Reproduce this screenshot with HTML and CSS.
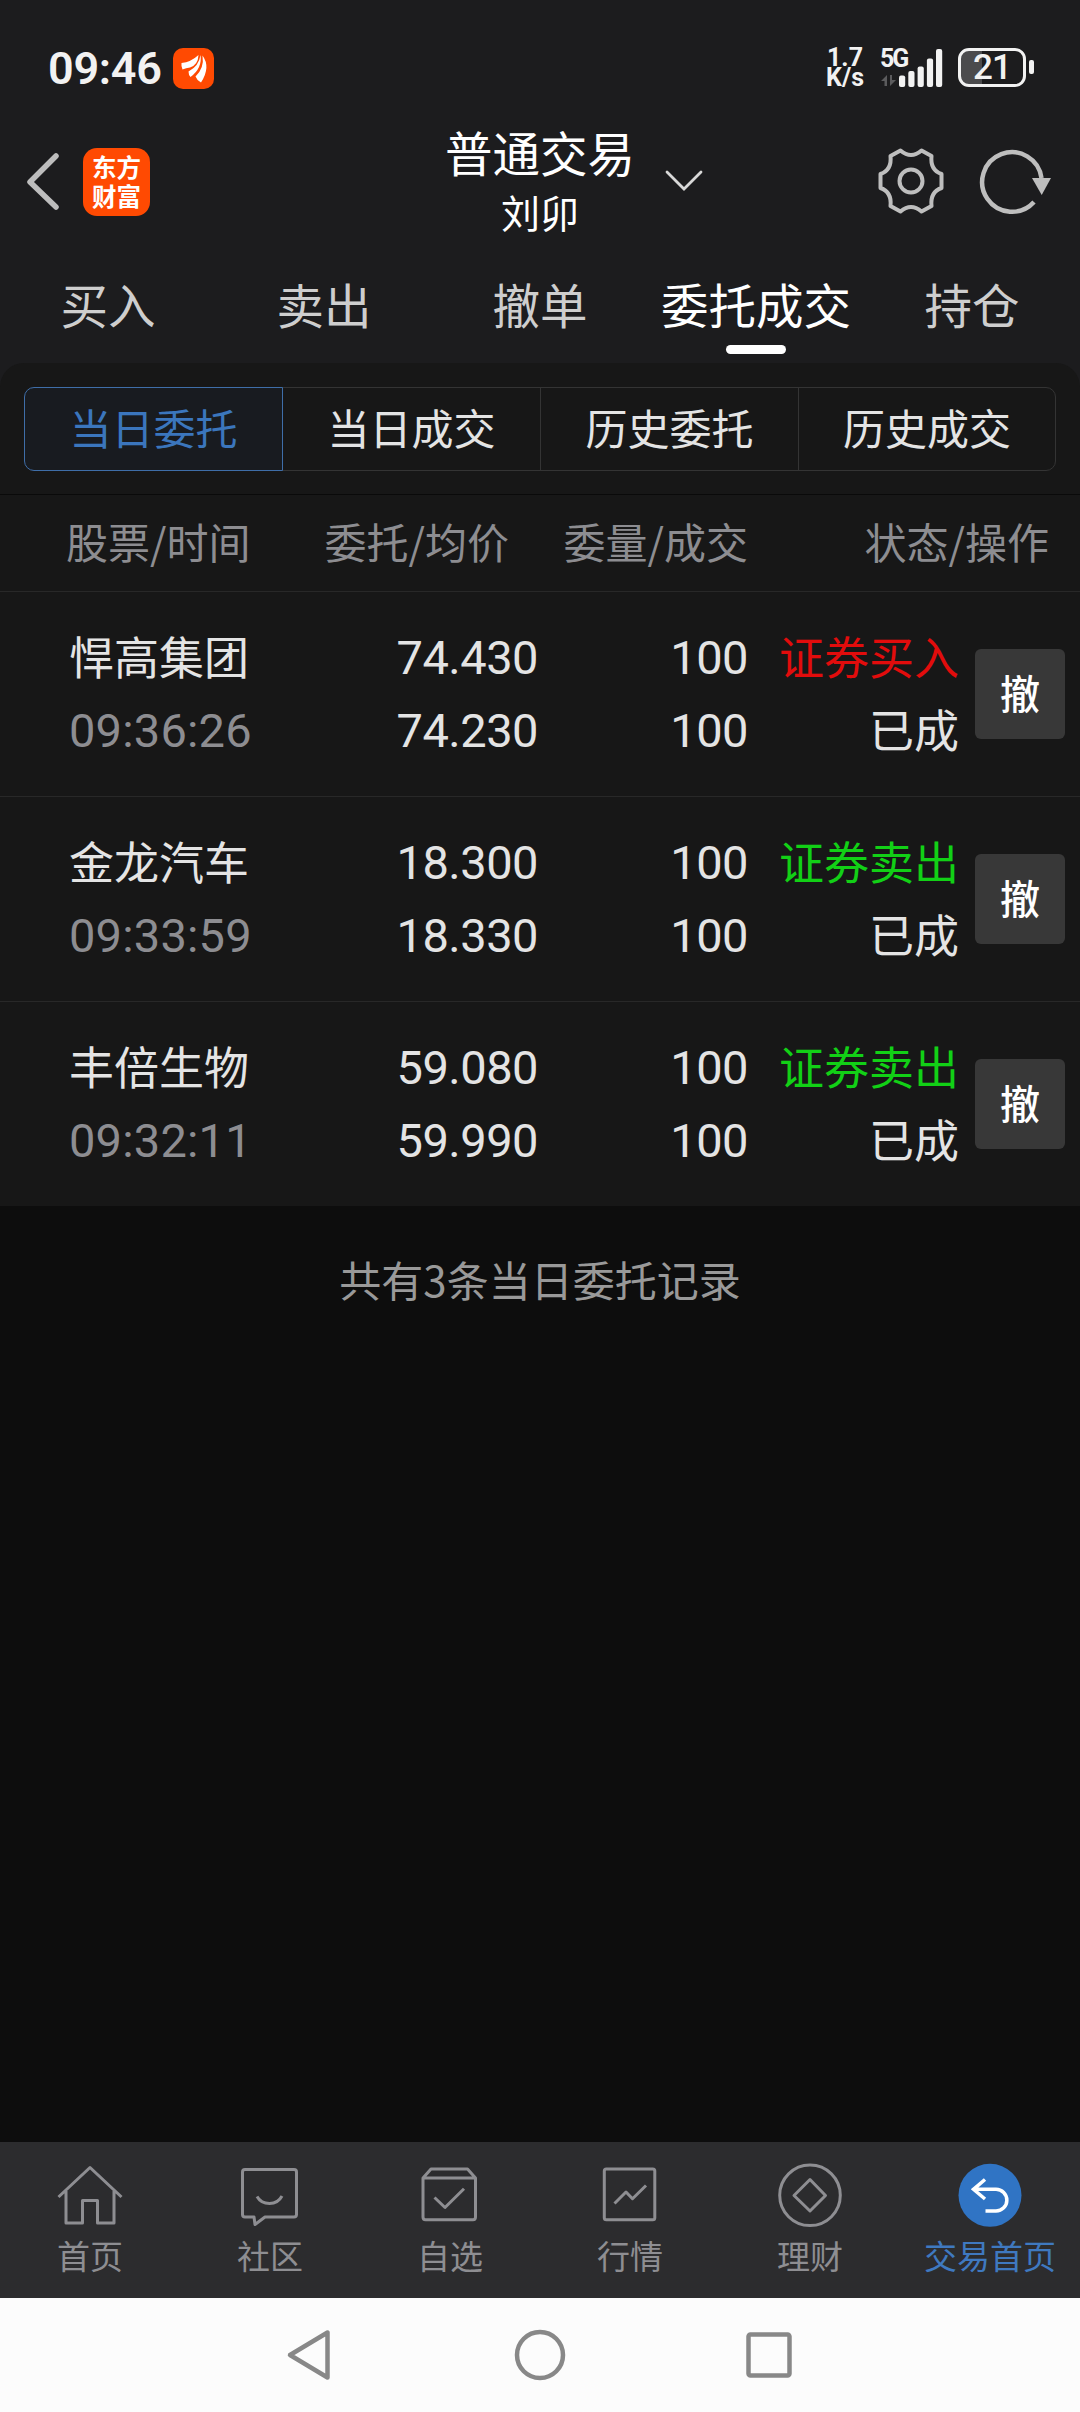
FILE: index.html
```html
<!DOCTYPE html>
<html lang="zh-CN">
<head>
<meta charset="utf-8">
<title>普通交易</title>
<link rel="stylesheet" href="styles.css">
</head>
<body>
<div class="app">
  <div class="status">
    <span class="clock">09:46</span>
    <svg class="status-logo" width="41" height="41" viewBox="0 0 41 41"><rect width="41" height="41" rx="10" fill="#ff4a02"/><g fill="#fff"><path d="M8.500 15Q18 14 25.500 7Q25 17 17 19.500Q13 20 9.500 21.500Q8 18 8.500 15Z"/><path d="M27.500 7Q29.500 20 17.500 29Q15.500 27 15.500 23.500Q26 18 27.500 7Z"/><path d="M29.500 7.500Q38 19 28 34.500Q24 32.500 22.500 28.500Q31.500 20 29.500 7.500Z"/></g></svg>
    <div class="speed"><span>1.7</span><span>K/s</span></div>
    <div class="signal">
      <span class="net">5G</span>
      <svg width="62" height="38" viewBox="0 0 62 38"><path d="M0 32L6 26V37H3.500V32ZM8.500 26H11V31H15L9 37V26Z" fill="#5b5b5d"/><g fill="#f2f2f2"><rect x="18" y="26.500" width="6.200" height="11.500" rx="2"/><rect x="27.300" y="22" width="6.200" height="16" rx="2"/><rect x="36.600" y="17.500" width="6.200" height="20.500" rx="2"/><rect x="45.900" y="9.500" width="6.200" height="28.500" rx="2"/><rect x="55" y="0" width="6.200" height="38" rx="2"/></g></svg>
    </div>
    <div class="battery"><span class="level">21</span></div>
    <span class="battery-cap"></span>
  </div>

  <header class="header">
    <div class="side">
      <svg width="36" height="60" viewBox="0 0 36 60"><path d="M33 5L7 31L33 56" fill="none" stroke="#bdbdbd" stroke-width="5.500" stroke-linecap="round" stroke-linejoin="round"/></svg>
      <div class="brand"><span>东方</span><span>财富</span></div>
    </div>
    <div class="title"><h1>普通交易</h1><p>刘卯</p></div>
    <div class="side side-right">
      <svg class="drop" width="40" height="24" viewBox="0 0 40 24"><path d="M3 3L20 20L37 3" fill="none" stroke="#d8d8d8" stroke-width="2.800" stroke-linecap="round"/></svg>
      <svg class="gear" width="72" height="72" viewBox="-36 -36 72 72" fill="none" stroke="#bebebe" stroke-width="4" stroke-linejoin="round"><path d="M-20.500 -25L-10.500 -30.500Q0 -21.500 10.500 -30.500L20.500 -25Q19 -11 30.500 -7V7Q19 11 20.500 25L10.500 30.500Q0 21.500 -10.500 30.500L-20.500 25Q-19 11 -30.500 7V-7Q-19 -11 -20.500 -25Z"/><circle r="11.500"/></svg>
      <svg class="refresh" width="76" height="72" viewBox="-36 -36 76 72"><path d="M29.500 -3A29.800 29.800 0 1 0 22 21" fill="none" stroke="#bebebe" stroke-width="4.500"/><path d="M20 -3H39L29.700 14Z" fill="#bebebe"/></svg>
    </div>
  </header>

  <nav class="tabs">
    <span>买入</span><span>卖出</span><span>撤单</span><span class="active">委托成交</span><span>持仓</span>
  </nav>

  <main class="panel">
    <div class="segments">
      <span class="on">当日委托</span><span>当日成交</span><span>历史委托</span><span>历史成交</span>
    </div>
    <div class="cols head">
      <span class="c1">股票/时间</span><span>委托/均价</span><span>委量/成交</span><span>状态/操作</span>
    </div>
    <div class="cols row">
      <div class="c1"><p>悍高集团</p><p class="num dim">09:36:26</p></div>
      <div class="num"><p>74.430</p><p>74.230</p></div>
      <div class="num"><p>100</p><p>100</p></div>
      <div><p class="buy">证券买入</p><p>已成</p></div>
      <button class="cancel">撤</button>
    </div>
    <div class="cols row">
      <div class="c1"><p>金龙汽车</p><p class="num dim">09:33:59</p></div>
      <div class="num"><p>18.300</p><p>18.330</p></div>
      <div class="num"><p>100</p><p>100</p></div>
      <div><p class="sell">证券卖出</p><p>已成</p></div>
      <button class="cancel">撤</button>
    </div>
    <div class="cols row">
      <div class="c1"><p>丰倍生物</p><p class="num dim">09:32:11</p></div>
      <div class="num"><p>59.080</p><p>59.990</p></div>
      <div class="num"><p>100</p><p>100</p></div>
      <div><p class="sell">证券卖出</p><p>已成</p></div>
      <button class="cancel">撤</button>
    </div>
  </main>
  <p class="summary">共有3条当日委托记录</p>

  <nav class="bottom">
    <a><svg width="70" height="70" viewBox="0 0 70 70"><path d="M3.500 37L35 7.500L66.500 37M11 31V63H27.500V40.500H42.500V63H59V31"/></svg>首页</a>
    <a><svg width="70" height="70" viewBox="0 0 70 70"><path d="M10 9.500H59Q61.500 9.500 61.500 12V54.500Q61.500 57 59 57H30L20 64.500L19 57H10Q7.500 57 7.500 54.500V12Q7.500 9.500 10 9.500ZM22 36.500Q26 43.500 34.500 43.500T47 36"/></svg>社区</a>
    <a><svg width="70" height="70" viewBox="0 0 70 70"><path d="M8 18L16 9H52.500L60.500 18V57Q60.500 59.700 58 59.700H10.500Q8 59.700 8 57ZM8 18H60.500M19.500 37.500L30 47.500L49 28.700"/></svg>自选</a>
    <a><svg width="70" height="70" viewBox="0 0 70 70"><rect x="9.300" y="9" width="50.500" height="50.700" rx="2"/><path d="M19.500 43.500L31 32L37.500 38.700L51 25.500"/></svg>行情</a>
    <a><svg width="70" height="70" viewBox="0 0 70 70"><circle cx="35" cy="35.300" r="30.300"/><path d="M35 19.500L50.500 35.500L35 51L19 35.500Z"/></svg>理财</a>
    <a class="current"><svg width="70" height="70" viewBox="0 0 70 70"><circle cx="35" cy="35.300" r="31.500" fill="#3074c4" stroke="none"/><path d="M30 19.500L18.500 29.300L30 39M18.500 29.300H41A10.800 10.800 0 0 1 41 51H30.500" stroke="#fff"/></svg>交易首页</a>
  </nav>
  <div class="system">
    <svg width="52" height="54" viewBox="0 0 52 54"><path d="M42.500 4.500V49.500L5 27Z"/></svg>
    <svg width="52" height="54" viewBox="0 0 52 54"><circle cx="26" cy="27" r="23"/></svg>
    <svg width="52" height="54" viewBox="0 0 52 54"><rect x="5.500" y="6.500" width="41" height="41" rx="2"/></svg>
  </div>
</div>
</body>
</html>
```
FILE: styles.css
```css
* { box-sizing: border-box; margin: 0; padding: 0; }
body { background: #0d0d0d; font-family: "Noto Sans CJK SC", sans-serif; color: #e4e4e4; }
.app { width: 1080px; height: 2412px; display: flex; flex-direction: column; overflow: hidden; background: #0d0d0d; }
svg { display: block; flex: none; }

.status { height: 136px; background: #1c1c1e; display: flex; align-items: flex-start; padding: 48px 44px 0 48px; font-family: Roboto, sans-serif; color: #f2f2f2; }
.clock { width: 125px; font-size: 45px; font-weight: 600; line-height: 41px; letter-spacing: -0.3px; }
.speed { width: 42px; margin-left: 610px; font-size: 25px; font-weight: 700; line-height: 20px; display: flex; flex-direction: column; align-items: center; }
.signal { position: relative; margin-left: 15px; padding-top: 1px; }
.net { position: absolute; left: -1px; top: 1px; font-size: 25px; font-weight: 700; line-height: 20px; letter-spacing: -2px; }
.battery { width: 68px; height: 39px; margin-left: 15px; border: 3px solid #f2f2f2; border-radius: 11px; background: linear-gradient(90deg, #4b4b4d 21px, transparent 21px); text-align: center; }
.level { display: block; font-size: 35px; font-weight: 500; line-height: 34px; letter-spacing: -1px; }
.battery-cap { width: 5px; height: 14px; margin: 12px 0 0 3px; border-radius: 2px; background: #f2f2f2; }

.header { height: 114px; background: #1c1c1e; display: grid; grid-template-columns: 400px 280px 400px; }
.side { display: flex; align-items: flex-start; padding: 15px 0 0 23px; }
.side > svg:first-child { margin-right: 24px; }
.brand { width: 67px; height: 68px; margin-top: -3px; border-radius: 14px; background: #ff4a02; color: #fff; display: flex; flex-direction: column; align-items: center; justify-content: center; font-size: 24.500px; font-weight: 700; line-height: 29px; padding-bottom: 3px; }
.title { text-align: center; color: #fff; }
.title h1 { font-size: 47.500px; font-weight: 400; line-height: 60px; margin-top: -14px; }
.title p { font-size: 39px; line-height: 58px; }
.side-right { padding: 9px 0 0; }
.side-right > svg.drop { margin: 24px 0 0 -16px; }
.gear { margin-left: 170.500px; }
.refresh { margin-left: 29px; }

.tabs { height: 113px; background: #1c1c1e; display: grid; grid-template-columns: repeat(5, 216px); color: #cecece; font-size: 47.500px; line-height: 108px; text-align: center; }
.tabs span { display: flex; flex-direction: column; align-items: center; }
.tabs .active { color: #fff; }
.tabs .active::after { content: ""; width: 60px; height: 9px; margin-top: -13px; border-radius: 4.500px; background: #fff; }

.panel { background: #171717; border-radius: 24px 24px 0 0; box-shadow: 0 -15px 0 15px #1c1c1e; clip-path: inset(0); }
.segments { height: 132px; padding: 24px 24px; display: grid; grid-template-columns: repeat(4, 1fr); border-bottom: 1px solid #0a0a0a; }
.segments span { height: 84px; border: 1px solid #343434; margin-right: -1px; text-align: center; font-size: 42px; line-height: 78px; }
.segments span:last-child { border-radius: 0 10px 10px 0; margin-right: 0; }
.segments .on { z-index: 1; border-color: #3f6ea8; border-radius: 10px 0 0 10px; background: #181b20; color: #3b76bd; }
.cols { display: grid; grid-template-columns: 180px 289px 210px 211px 1fr; text-align: right; padding-left: 69px; border-bottom: 1px solid #282828; }
.cols .c1 { text-align: left; }
.head { height: 97px; padding-left: 66px; grid-template-columns: 190px 253px 239px 301px; color: #8d8d91; font-size: 42px; line-height: 91px; }
.row { height: 205px; padding-top: 27px; font-size: 45px; line-height: 73px; white-space: nowrap; }
.row:last-child { height: 204px; border-bottom: 0; }
.row p { height: 73px; }
.row .c1 .num { padding-top: 2px; letter-spacing: 0.200px; }
.num { font-family: Roboto, sans-serif; font-size: 47px; letter-spacing: -0.500px; }
div.num { padding-top: 2px; }
.dim { color: #8d8d91; }
.buy { color: #e20c0c; }
.sell { color: #12d016; }
.cancel { width: 90px; height: 90px; margin: 30px 0 0 16px; border: 0; border-radius: 6px; background: #383838; color: #fff; font: 500 40px/84px "Noto Sans CJK SC", sans-serif; padding-bottom: 5px; }
.summary { flex: 1; text-align: center; font-size: 42px; line-height: 60px; padding-top: 43px; color: #999; }

.bottom { height: 156px; background: #2c2c2e; display: grid; grid-template-columns: repeat(6, 180px); color: #8e8e92; font-size: 33px; line-height: 51px; }
.bottom a { display: flex; flex-direction: column; align-items: center; padding-top: 18px; white-space: nowrap; }
.bottom svg { fill: none; stroke: #8e8e92; stroke-width: 3; stroke-linejoin: round; }
.bottom .current { color: #3f79c0; }
.bottom .current svg { stroke-width: 3.500; stroke-linejoin: miter; }
.system { height: 114px; background: #fcfcfc; display: flex; justify-content: center; align-items: center; gap: 177px; }
.system svg { fill: none; stroke: #888; stroke-width: 4.500; stroke-linejoin: round; }
```
